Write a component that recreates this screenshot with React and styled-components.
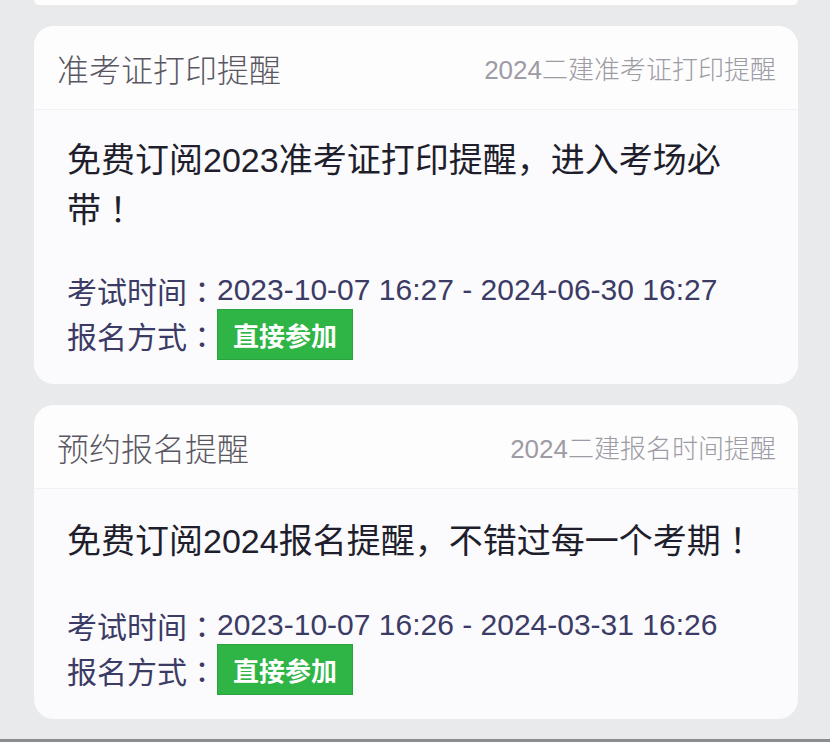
import React from "react";
import styled, { createGlobalStyle } from "styled-components";

const Global = createGlobalStyle`
  html, body { margin: 0; padding: 0; }
  body {
    background: #e9eaec;
    font-family: "Liberation Sans", "Noto Sans CJK SC", sans-serif;
  }
`;

const Page = styled.div`
  width: 830px;
  height: 742px;
  box-sizing: border-box;
  padding: 0 32px 0 34px;
  display: flex;
  flex-direction: column;
  gap: 21px;
  overflow: hidden;
  border-bottom: 3px solid #8a8c90;
`;

const PrevCardEdge = styled.div`
  height: 5px;
  background: #fdfdfe;
  border-radius: 0 0 18px 18px;
  flex: none;
`;

const Card = styled.section`
  background: #fbfbfd;
  border-radius: 20px;
  overflow: hidden;
  flex: none;
`;

const Header = styled.header`
  height: 84px;
  box-sizing: border-box;
  padding: 0 22px 0 23px;
  display: flex;
  align-items: center;
  justify-content: space-between;
  background: #fdfdfe;
  border-bottom: 1px solid #f0f0f5;
`;

const Title = styled.h2`
  margin: 0;
  font-size: 32px;
  font-weight: 300;
  color: #5a5762;
`;

const Tag = styled.span`
  font-size: 26px;
  font-weight: 300;
  color: #9d9ba4;
`;

const Body = styled.div`
  padding: 26px 33px 24px 33px;
`;

const Headline = styled.p`
  margin: 0;
  font-size: 34px;
  line-height: 48px;
  color: #1f1e2c;
`;

const Punct = styled.span`
  font-family: "Noto Sans CJK TC", sans-serif;
`;

const Meta = styled.div`
  margin-top: ${(p) => p.$gap}px;
  display: flex;
  flex-direction: column;
`;

const MetaRow = styled.div`
  font-size: 30px;
  height: ${(p) => (p.$tall ? 51 : 42)}px;
  margin-top: ${(p) => (p.$tall ? -2 : 0)}px;
  color: #3c3b66;
  display: flex;
  align-items: center;
`;

const JoinButton = styled.span`
  display: inline-flex;
  align-items: center;
  justify-content: center;
  width: 136px;
  height: 51px;
  background: #2fb446;
  color: #ffffff;
  font-size: 26px;
  font-weight: 600;
  border: 1px solid #29a33f;
  box-sizing: border-box;
`;

const items = [
  {
    title: "准考证打印提醒",
    tag: "2024二建准考证打印提醒",
    headline: ["免费订阅2023准考证打印提醒，进入考场必带", "！"],
    time: "2023-10-07 16:27 - 2024-06-30 16:27",
    gap: 35,
  },
  {
    title: "预约报名提醒",
    tag: "2024二建报名时间提醒",
    headline: ["免费订阅2024报名提醒，不错过每一个考期", "！"],
    time: "2023-10-07 16:26 - 2024-03-31 16:26",
    gap: 39,
  },
];

export default function App() {
  return (
    <>
      <Global />
      <Page>
        <PrevCardEdge />
        {items.map((it) => (
          <Card key={it.title}>
            <Header>
              <Title>{it.title}</Title>
              <Tag>{it.tag}</Tag>
            </Header>
            <Body>
              <Headline>
                {it.headline[0]}
                <Punct>{it.headline[1]}</Punct>
              </Headline>
              <Meta $gap={it.gap}>
                <MetaRow>
                  考试时间<Punct>：</Punct>
                  {it.time}
                </MetaRow>
                <MetaRow $tall>
                  报名方式<Punct>：</Punct>
                  <JoinButton>直接参加</JoinButton>
                </MetaRow>
              </Meta>
            </Body>
          </Card>
        ))}
      </Page>
    </>
  );
}
